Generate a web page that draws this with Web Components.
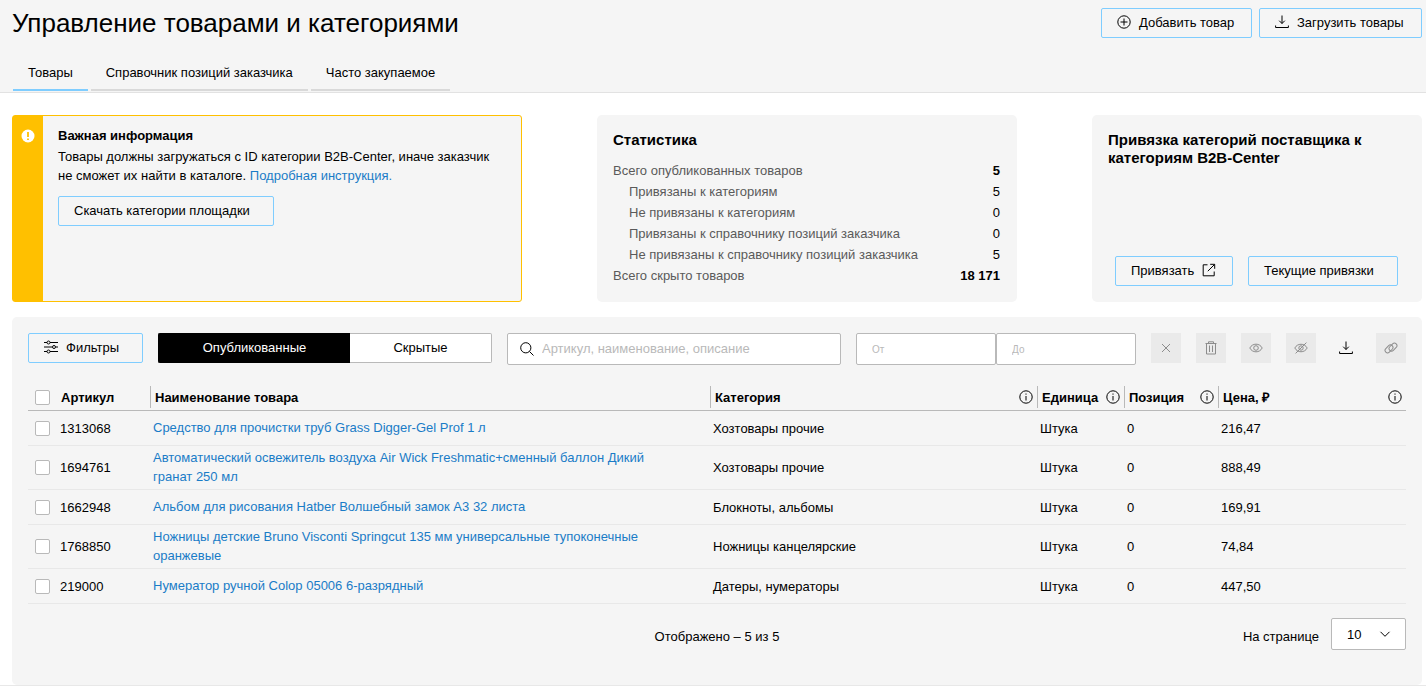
<!DOCTYPE html>
<html lang="ru">
<head>
<meta charset="utf-8">
<meta name="viewport" content="width=device-width, initial-scale=1">
<title>Управление товарами и категориями</title>
<style>
  :root {
    --surface: #f5f5f5;
    --accent: #7fcdff;
    --link: #1a7cc7;
    --line: #b9b9b9;
    --warn: #ffc000;
    --muted: #5a5a5a;
  }
  body {
    margin: 0;
    background: #fff;
    color: #000;
    font: 13px/19px "Liberation Sans", Arial, sans-serif;
  }
</style>
</head>
<body>
<catalog-page></catalog-page>

<script>
const BASE = `*, *::before, *::after { box-sizing: border-box; } :host([hidden]) { display: none; }`;

function define(name, html, setup) {
  const template = document.createElement('template');
  template.innerHTML = html;
  customElements.define(name, class extends HTMLElement {
    constructor() {
      super();
      this.attachShadow({ mode: 'open' }).append(template.content.cloneNode(true));
    }
    connectedCallback() {
      if (setup && !this.ready) { this.ready = true; setup(this, this.shadowRoot); }
    }
  });
}

const ICONS = {
  plus: '<circle cx="7" cy="7" r="6.2"/><path d="M7 3.5v7M3.5 7h7"/>',
  download: '<path d="M7 .5v8M4.200 5.700 7 8.500l2.800-2.800M.6 10.500v2h12.800v-2"/>',
  external: '<path d="M5.500 1.800H1.200v11h11V8.500M5.800 8.200l6.700-6.700M8.200 1.300h4.500v4.500"/>',
  filters: '<path d="M0 2.5h3M6 2.5h8M0 7h8M12 7h2M0 11.5h3M6 11.5h8"/><circle cx="4.5" cy="2.5" r="1.5"/><circle cx="10" cy="7" r="1.5"/><circle cx="4.5" cy="11.5" r="1.5"/>',
  search: '<circle cx="5.8" cy="5.8" r="5.1"/><path d="m9.5 9.5 4 4"/>',
  close: '<path d="m3 3 8 8M11 3l-8 8"/>',
  trash: '<path d="M1.5 2.5h11M4.5 2.4V.8h5v1.6M2.5 2.8v10.200h9V2.8M5.500 4.500v6.500M8.500 4.500v6.500"/>',
  eye: '<path d="M.8 7C3.4 1.900 10.600 1.900 13.200 7 10.600 12.100 3.400 12.100.8 7Z"/><circle cx="7" cy="7" r="2.3"/>',
  hidden: '<path d="M.8 7C3.400 2 10.600 2 13.200 7 10.600 12 3.400 12 .8 7Z"/><circle cx="7" cy="7" r="2.200"/><path d="M1.600 12.400 12.400 1.600"/>',
  link: '<rect x="-4.500" y="-2.500" width="9" height="5" rx="2.500" transform="translate(5 7.900) rotate(-45)"/><rect x="-4.500" y="-2.500" width="9" height="5" rx="2.500" transform="translate(9 6.100) rotate(-45)"/>',
  info: '<circle cx="7" cy="7" r="6.200"/><path d="M7 6v4.500M7 3.500v1.200"/>',
  chevron: '<path d="m2.500 4.800 4.500 4.500 4.500-4.500"/>',
  alert: '<circle cx="7" cy="7" r="6.500" fill="#fff" stroke="none"/><path d="M7 3v5" stroke="#ffc000" stroke-width="1.800"/><path d="M7 9.400v1.600" stroke="#ffc000" stroke-width="1.800"/>'
};

define('ui-icon', `<style>${BASE}
  :host { display: block; flex: none; width: 14px; height: 14px; }
  svg { display: block; width: 100%; height: 100%; fill: none; stroke: currentColor; stroke-width: 1; }
</style><svg viewBox="0 0 14 14" aria-hidden="true"></svg>`, (el, root) => {
  root.querySelector('svg').innerHTML = ICONS[el.getAttribute('name')];
});

define('ui-button', `<style>${BASE}
  :host { display: block; flex: none; }
  button {
    display: flex; align-items: center; gap: 8px; width: 100%; height: 30px;
    padding: 0 15px 2px; border: 1px solid var(--accent); border-radius: 2px;
    background: transparent; color: #000; font: inherit; white-space: nowrap; cursor: pointer;
  }
  button:hover { background: #fff; }
</style><button type="button"><slot></slot></button>`);

define('icon-button', `<style>${BASE}
  :host { display: block; flex: none; }
  button {
    display: grid; place-items: center; width: 30px; height: 30px; padding: 0;
    border: 0; background: transparent; color: #000; cursor: pointer;
  }
  button:disabled { background: #eaeaea; color: #8c8c8c; cursor: default; }
</style><button type="button"><slot></slot></button>`, (el, root) => {
  const button = root.querySelector('button');
  button.disabled = el.hasAttribute('disabled');
  button.setAttribute('aria-label', el.getAttribute('label'));
});

define('page-tabs', `<style>${BASE}
  :host { display: block; }
  nav { display: flex; gap: 3px; padding-left: 1px; }
  a {
    padding: 9px 15px 7px; border-bottom: 2px solid #d9d9d9;
    color: #000; text-decoration: none; line-height: 19px;
  }
  a[aria-current] { border-color: var(--accent); }
</style>
<nav aria-label="Разделы">
  <a href="#goods" aria-current="page">Товары</a>
  <a href="#reference">Справочник позиций заказчика</a>
  <a href="#frequent">Часто закупаемое</a>
</nav>`);

define('page-header', `<style>${BASE}
  :host {
    display: flex; justify-content: space-between; align-items: flex-start;
    height: 93px; padding: 0 4px 0 12px;
    background: var(--surface); border-bottom: 1px solid #e2e2e2;
  }
  h1 { margin: 8px 0 16px; font-size: 26px; line-height: 30px; font-weight: 400; }
  .actions { display: flex; gap: 7px; padding-top: 8px; }
</style>
<div>
  <h1>Управление товарами и категориями</h1>
  <page-tabs></page-tabs>
</div>
<div class="actions"><slot></slot></div>`);

define('info-alert', `<style>${BASE}
  :host { display: flex; border: 1px solid var(--warn); border-radius: 3px; background: var(--surface); }
  .band { flex: none; width: 30px; padding: 13px 0 0 8px; background: var(--warn); }
  .body { padding: 10px 15px; }
  h2 { margin: 0 0 2px; font-size: 13px; line-height: 19px; }
  p { margin: 0 0 11px; line-height: 19px; }
  a { color: var(--link); text-decoration: none; }
  ui-button { width: 216px; }
</style>
<div class="band"><ui-icon name="alert"></ui-icon></div>
<div class="body">
  <h2>Важная информация</h2>
  <p>Товары должны загружаться с ID категории B2B-Center, иначе заказчик не сможет их найти в каталоге. <a href="#help">Подробная инструкция.</a></p>
  <ui-button>Скачать категории площадки</ui-button>
</div>`);

define('stats-card', `<style>${BASE}
  :host { display: block; padding: 16px 16px 12px; border-radius: 5px; background: var(--surface); }
  h2 { margin: 0 0 11px; font-size: 15px; line-height: 18px; }
  dl { margin: 0; }
  dl > div { display: flex; justify-content: space-between; line-height: 21px; padding-right: 1px; }
  dt { color: var(--muted); }
  dd { margin: 0; }
  .sub dt { padding-left: 16px; }
  .total dd { font-weight: 700; }
</style>
<h2>Статистика</h2>
<dl>
  <div class="total"><dt>Всего опубликованных товаров</dt><dd>5</dd></div>
  <div class="sub"><dt>Привязаны к категориям</dt><dd>5</dd></div>
  <div class="sub"><dt>Не привязаны к категориям</dt><dd>0</dd></div>
  <div class="sub"><dt>Привязаны к справочнику позиций заказчика</dt><dd>0</dd></div>
  <div class="sub"><dt>Не привязаны к справочнику позиций заказчика</dt><dd>5</dd></div>
  <div class="total"><dt>Всего скрыто товаров</dt><dd>18 171</dd></div>
</dl>`);

define('binding-card', `<style>${BASE}
  :host {
    display: flex; flex-direction: column; justify-content: space-between;
    padding: 16px; border-radius: 5px; background: var(--surface);
  }
  h2 { margin: 0; font-size: 15px; line-height: 18px; }
  .actions { display: flex; gap: 15px; padding: 0 7px; }
  .bind { width: 118px; }
  .current { width: 150px; }
</style>
<h2>Привязка категорий поставщика к категориям B2B-Center</h2>
<div class="actions">
  <ui-button class="bind">Привязать <ui-icon name="external"></ui-icon></ui-button>
  <ui-button class="current">Текущие привязки</ui-button>
</div>`);

define('state-switch', `<style>${BASE}
  :host { display: flex; flex: none; width: 334px; height: 30px; }
  button {
    padding: 0 0 2px; border: 1px solid var(--line); background: #fff; color: #000;
    font: inherit; cursor: pointer;
  }
  .published { flex: none; width: 192px; border-radius: 2px 0 0 2px; border-right: 0; }
  .hidden { flex: 1; border-radius: 0 2px 2px 0; border-left: 0; }
  button[aria-pressed="true"] { background: #000; border-color: #000; color: #fff; }
</style>
<button class="published" type="button" aria-pressed="true">Опубликованные</button>
<button class="hidden" type="button" aria-pressed="false">Скрытые</button>`, (el, root) => {
  const buttons = [...root.querySelectorAll('button')];
  buttons.forEach(b => b.addEventListener('click', () =>
    buttons.forEach(o => o.setAttribute('aria-pressed', String(o === b)))));
});

define('search-box', `<style>${BASE}
  :host { display: block; }
  label {
    display: flex; align-items: center; gap: 8px; height: 32px; padding: 0 12px;
    border: 1px solid var(--line); border-radius: 2px; background: #fff;
  }
  input { flex: 1; min-width: 0; height: 30px; padding: 0 0 1px; border: 0; outline: 0; background: none; font: inherit; }
  input::placeholder { color: var(--line); opacity: 1; }
</style>
<label><ui-icon name="search"></ui-icon><input type="text" aria-label="Поиск" placeholder="Артикул, наименование, описание"></label>`);

define('price-range', `<style>${BASE}
  :host { display: flex; flex: none; width: 280px; }
  input {
    flex: 1; min-width: 0; height: 32px; padding: 0 15px 2px; border: 1px solid var(--line);
    border-radius: 2px; background: #fff; font: inherit;
  }
  input::placeholder { color: var(--line); opacity: 1; font-size: 10px; }
</style>
<input type="text" aria-label="Цена от" placeholder="От"><input type="text" aria-label="Цена до" placeholder="До">`);

define('list-toolbar', `<style>${BASE}
  :host { display: flex; align-items: flex-start; gap: 15px; }
  .filters { width: 115px; }
  search-box { flex: 1; }
</style>
<ui-button class="filters"><ui-icon name="filters"></ui-icon>Фильтры</ui-button>
<state-switch></state-switch>
<search-box></search-box>
<price-range></price-range>
<icon-button disabled label="Очистить"><ui-icon name="close"></ui-icon></icon-button>
<icon-button disabled label="Удалить"><ui-icon name="trash"></ui-icon></icon-button>
<icon-button disabled label="Показать"><ui-icon name="eye"></ui-icon></icon-button>
<icon-button disabled label="Скрыть"><ui-icon name="hidden"></ui-icon></icon-button>
<icon-button label="Скачать"><ui-icon name="download"></ui-icon></icon-button>
<icon-button disabled label="Привязать"><ui-icon name="link"></ui-icon></icon-button>`);

const GOODS = [
  ['1313068', 'Средство для прочистки труб Grass Digger-Gel Prof 1 л', 'Хозтовары прочие', '216,47'],
  ['1694761', 'Автоматический освежитель воздуха Air Wick Freshmatic+сменный баллон Дикий гранат 250 мл', 'Хозтовары прочие', '888,49'],
  ['1662948', 'Альбом для рисования Hatber Волшебный замок А3 32 листа', 'Блокноты, альбомы', '169,91'],
  ['1768850', 'Ножницы детские Bruno Visconti Springcut 135 мм универсальные тупоконечные оранжевые', 'Ножницы канцелярские', '74,84'],
  ['219000', 'Нумератор ручной Colop 05006 6-разрядный', 'Датеры, нумераторы', '447,50']
];

define('goods-table', `<style>${BASE}
  :host { display: block; }
  table { width: 100%; table-layout: fixed; border-collapse: separate; border-spacing: 0; }
  .c-id { width: 122px; } .c-name { width: 560px; } .c-unit { width: 87px; }
  .c-pos { width: 94px; } .c-price { width: 188px; }
  th { padding: 0 0 2px; border-bottom: 1px solid var(--line); text-align: left; }
  th > div {
    display: flex; align-items: center; justify-content: space-between;
    height: 22px; padding: 0 4px; border-left: 1px solid var(--line);
  }
  th:first-child > div { justify-content: flex-start; gap: 11px; padding-left: 7px; border-left: 0; }
  td { height: 35px; padding: 2px 3px; border-bottom: 1px solid #e8e8e8; vertical-align: middle; line-height: 19px; }
  td:first-child { padding-left: 7px; }
  label { display: flex; align-items: center; gap: 10px; }
  td.name { padding: 2px 50px 3px 3px; }
  a { color: var(--link); text-decoration: none; }
  input {
    appearance: none; flex: none; width: 15px; height: 15px; margin: 0;
    border: 1px solid var(--line); border-radius: 2px; background: #fff;
  }
  input:checked { background: var(--link); border-color: var(--link); }
</style>
<table>
  <colgroup><col class="c-id"><col class="c-name"><col><col class="c-unit"><col class="c-pos"><col class="c-price"></colgroup>
  <thead><tr>
    <th scope="col"><div><input type="checkbox" aria-label="Выбрать все">Артикул</div></th>
    <th scope="col"><div>Наименование товара</div></th>
    <th scope="col"><div>Категория <ui-icon name="info"></ui-icon></div></th>
    <th scope="col"><div>Единица <ui-icon name="info"></ui-icon></div></th>
    <th scope="col"><div>Позиция <ui-icon name="info"></ui-icon></div></th>
    <th scope="col"><div>Цена, ₽ <ui-icon name="info"></ui-icon></div></th>
  </tr></thead>
  <tbody></tbody>
</table>`, (el, root) => {
  root.querySelector('tbody').innerHTML = GOODS.map(([id, name, category, price]) => `<tr>
    <td><label><input type="checkbox">${id}</label></td>
    <td class="name"><a href="#${id}">${name}</a></td>
    <td>${category}</td><td>Штука</td><td>0</td><td>${price}</td></tr>`).join('');
  root.querySelector('thead input').addEventListener('change', e =>
    root.querySelectorAll('tbody input').forEach(i => { i.checked = e.target.checked; }));
});

define('list-footer', `<style>${BASE}
  :host { display: grid; grid-template-columns: 1fr auto 1fr; align-items: center; }
  label { grid-column: 3; justify-self: end; display: flex; align-items: center; gap: 12px; }
  .status { grid-column: 2; padding-top: 4px; }
  .caption { padding-top: 4px; }
  .select { display: grid; align-items: center; width: 75px; }
  select {
    grid-area: 1 / 1; appearance: none; height: 32px; padding: 0 15px; border: 1px solid var(--line);
    border-radius: 2px; background: #fff; color: #000; font: inherit;
  }
  ui-icon { grid-area: 1 / 1; justify-self: end; margin-right: 14px; pointer-events: none; }
</style>
<span class="status">Отображено – 5 из 5</span>
<label><span class="caption">На странице</span>
  <span class="select"><select><option>10</option><option>20</option><option>50</option></select><ui-icon name="chevron"></ui-icon></span>
</label>`);

define('catalog-page', `<style>${BASE}
  :host { display: block; }
  .add { width: 151px; }
  .upload { width: 163px; }
  main { padding: 22px 4px 0 12px; border-bottom: 1px solid #e8e8e8; }
  .cards { display: grid; grid-template-columns: 17fr 14fr 11fr; gap: 75px; min-height: 187px; }
  .panel { margin-top: 15px; padding: 16px 16px 35px; border-radius: 5px; background: var(--surface); }
  goods-table { margin: 21px 0 14px; }
</style>
<page-header>
  <ui-button class="add"><ui-icon name="plus"></ui-icon>Добавить товар</ui-button>
  <ui-button class="upload"><ui-icon name="download"></ui-icon>Загрузить товары</ui-button>
</page-header>
<main>
  <div class="cards">
    <info-alert></info-alert>
    <stats-card></stats-card>
    <binding-card></binding-card>
  </div>
  <section class="panel" aria-label="Список товаров">
    <list-toolbar></list-toolbar>
    <goods-table></goods-table>
    <list-footer></list-footer>
  </section>
</main>`);
</script>
</body>
</html>
